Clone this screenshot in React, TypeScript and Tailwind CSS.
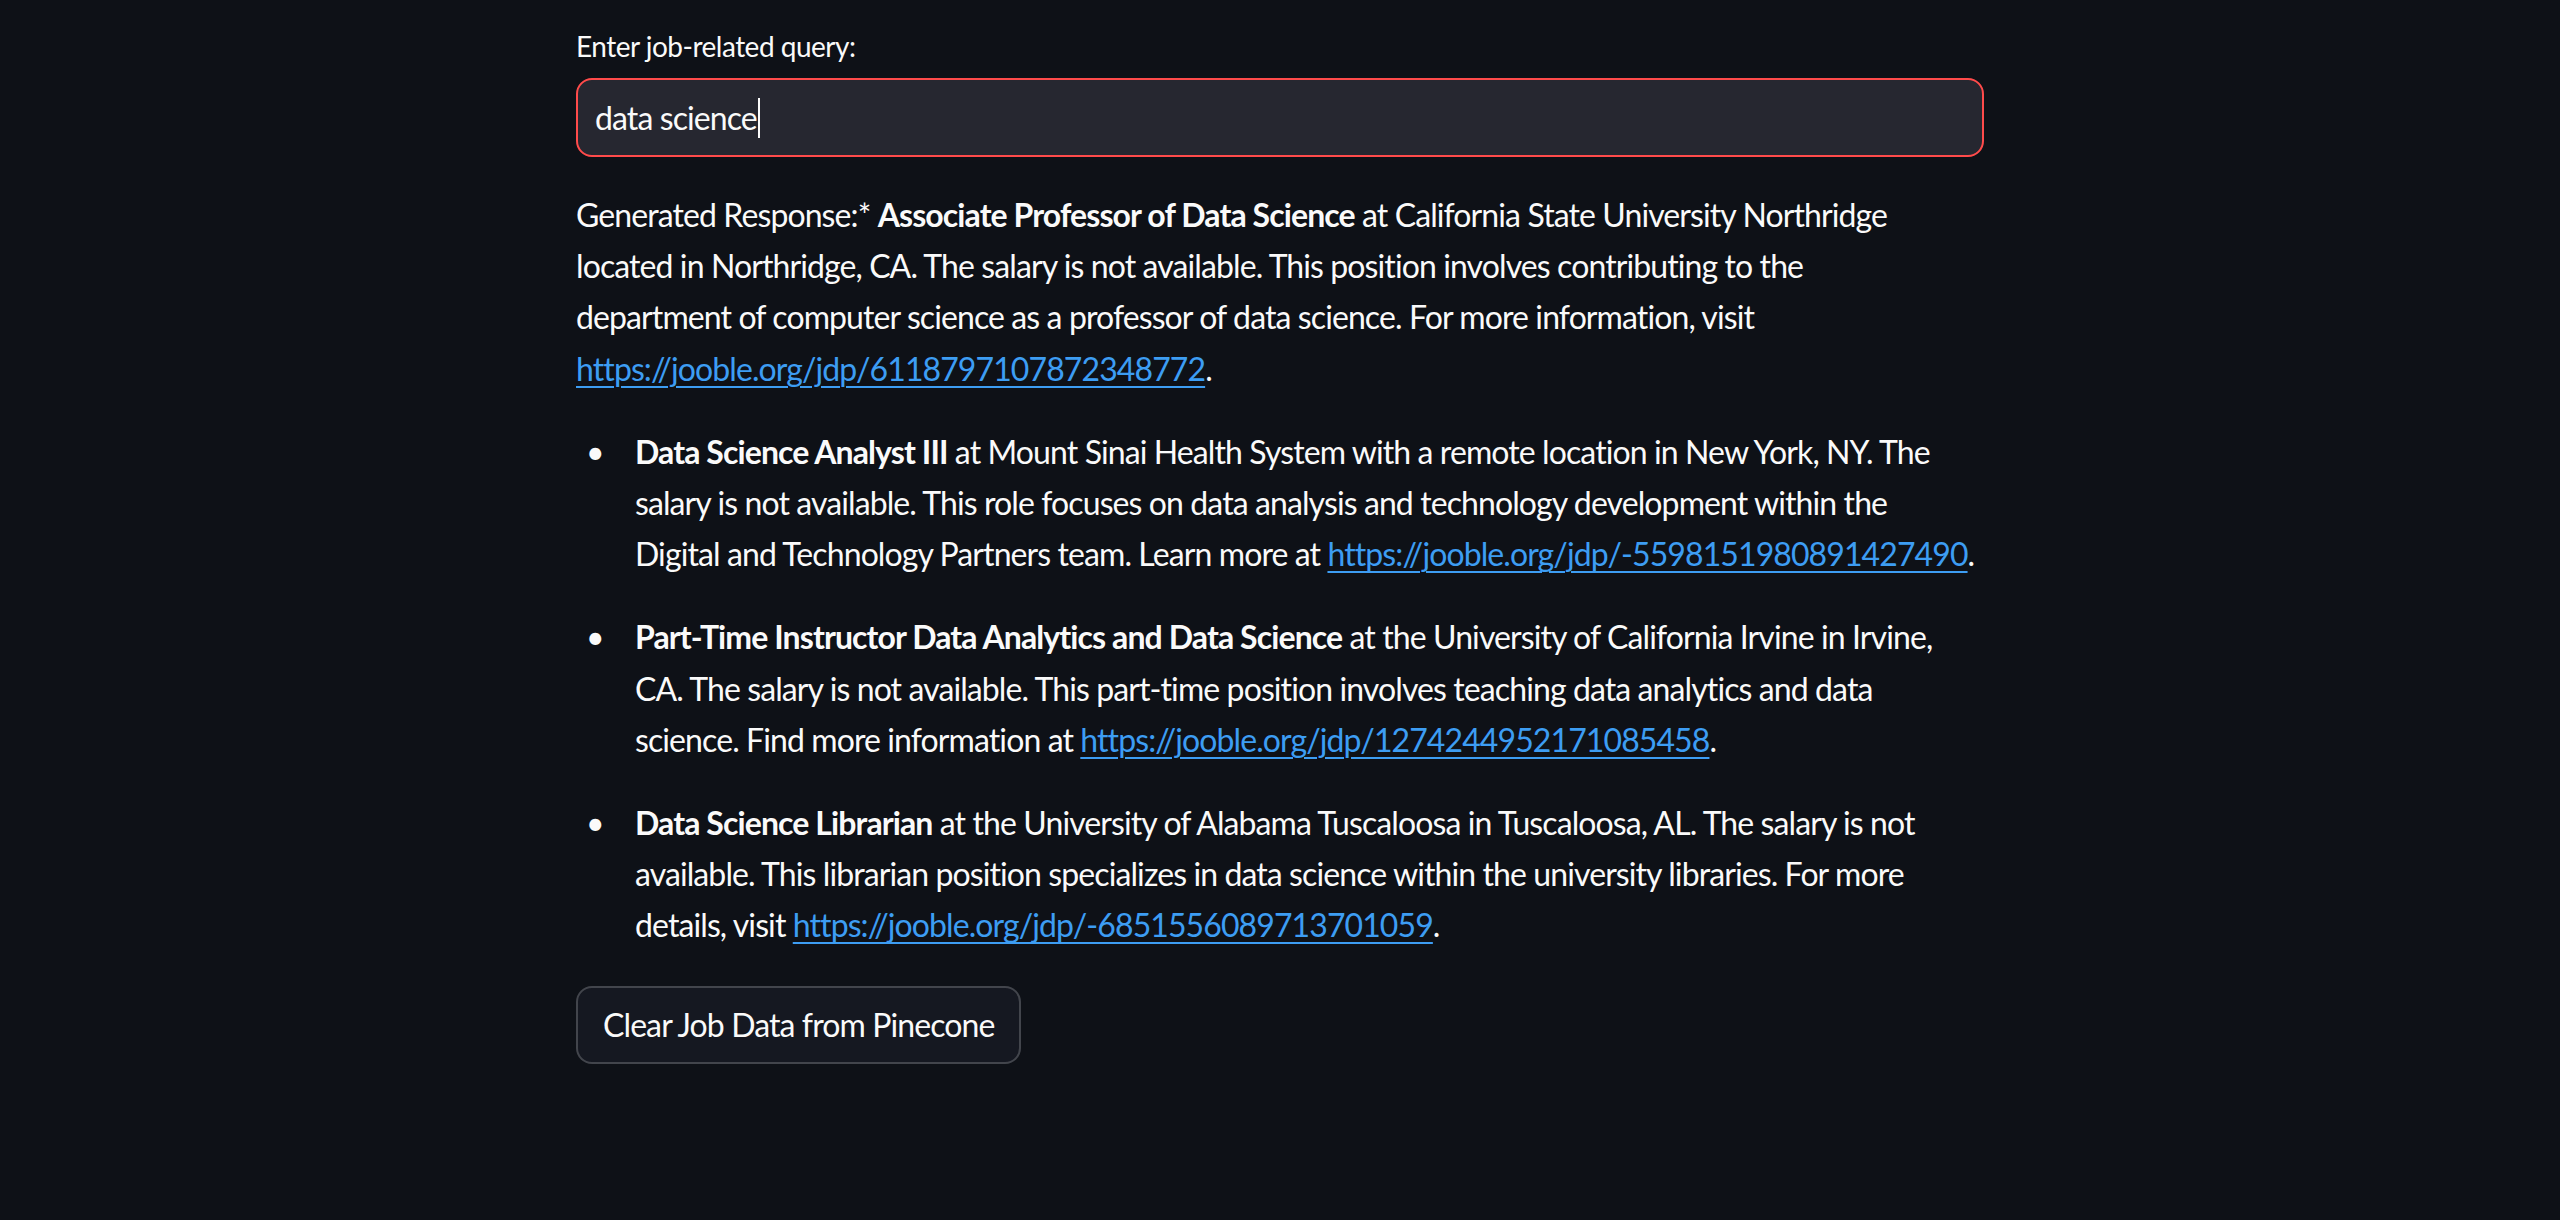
import React from "react";

const LINK = "text-[#3d9df3] underline underline-offset-[5px] decoration-2";

const Link = ({ href }: { href: string }) => (
  <a href="#" className={LINK}>
    {href}
  </a>
);

// line breaks follow the rendered markdown in the original
const jobs = [
  {
    key: "analyst",
    content: (
      <>
        <strong>Data Science Analyst III</strong> at Mount Sinai Health System with a remote location
        in New York, NY. The
        <br />
        salary is not available. This role focuses on data analysis and technology development within
        the
        <br />
        Digital and Technology Partners team. Learn more at{" "}
        <Link href="https://jooble.org/jdp/-5598151980891427490" />.
      </>
    ),
  },
  {
    key: "instructor",
    content: (
      <>
        <strong>Part-Time Instructor Data Analytics and Data Science</strong> at the University of
        California Irvine in Irvine,
        <br />
        CA. The salary is not available. This part-time position involves teaching data analytics and
        data
        <br />
        science. Find more information at <Link href="https://jooble.org/jdp/1274244952171085458" />.
      </>
    ),
  },
  {
    key: "librarian",
    content: (
      <>
        <strong>Data Science Librarian</strong> at the University of Alabama Tuscaloosa in Tuscaloosa,
        AL. The salary is not
        <br />
        available. This librarian position specializes in data science within the university
        libraries. For more
        <br />
        details, visit <Link href="https://jooble.org/jdp/-6851556089713701059" />.
      </>
    ),
  },
];

const App = () => {
  return (
    <div
      className="min-h-screen bg-[#0e1117] text-[#fafafa]"
      style={{ fontFamily: "Lato, 'Noto Sans', sans-serif" }}
    >
      <div className="mx-auto w-[1408px] pt-[24px]">
        {/* query input */}
        <label className="mb-[10px] block h-[44px] text-[28px] leading-[44px] tracking-[-0.5px]">
          Enter job-related query:
        </label>
        <div className="flex h-[79px] items-center rounded-[16px] border-2 border-[#ff4b4b] bg-[#262730] pl-[17px] text-[32px] tracking-[-0.9px]">
          <span>data science</span>
          <span className="ml-[1px] inline-block h-[40px] w-[2px] bg-[#fafafa]" />
        </div>

        {/* generated answer */}
        <div className="mt-[32px] text-[32px] leading-[51.2px] tracking-[-0.9px]">
          <p>
            Generated Response:* <strong>Associate Professor of Data Science</strong> at California
            State University Northridge
            <br />
            located in Northridge, CA. The salary is not available. This position involves
            contributing to the
            <br />
            department of computer science as a professor of data science. For more information, visit
            <br />
            <Link href="https://jooble.org/jdp/6118797107872348772" />.
          </p>
          <ul className="mt-[32px] flex flex-col gap-[32px]">
            {jobs.map((job) => (
              <li key={job.key} className="flex">
                <span className="w-[59px] shrink-0 pl-[10px]">•</span>
                <div className="whitespace-nowrap">{job.content}</div>
              </li>
            ))}
          </ul>
        </div>

        <button className="mt-[35px] h-[78px] rounded-[16px] border-2 border-[#fafafa]/20 bg-[#151821] px-[25px] text-[32px] tracking-[-0.9px]">
          Clear Job Data from Pinecone
        </button>
      </div>
    </div>
  );
};

export default App;
